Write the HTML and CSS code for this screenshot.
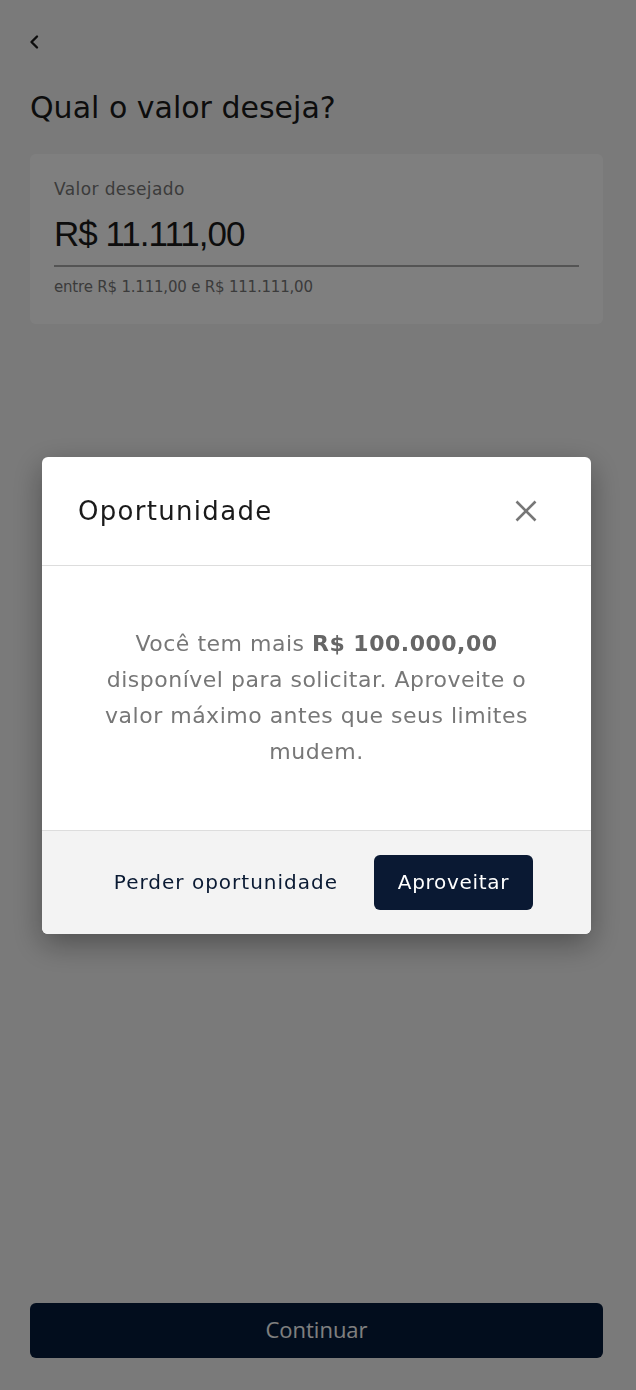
FILE: index.html
```html
<!DOCTYPE html>
<html lang="pt-BR">
<head>
    <meta charset="UTF-8" />
    <meta name="viewport" content="width=device-width, initial-scale=1.0" />
    <title>Qual o valor deseja?</title>
    <link rel="stylesheet" href="styles.css">
</head>
<body>
    <div class="page">
        <button class="back-button" aria-label="Voltar">
            <svg width="12" height="16" viewBox="0 0 12 16"><path d="M8 2.5 L2.5 8 L8 13.5" fill="none" stroke="#1a1a1a" stroke-width="2.4" stroke-linecap="round" stroke-linejoin="round"/></svg>
        </button>
        <h1 class="page-title">Qual o valor deseja?</h1>
        <div class="value-card">
            <label class="value-label">Valor desejado</label>
            <div class="value-amount">R$ 11.111,00</div>
            <div class="value-hint">entre R$ 1.111,00 e R$ 111.111,00</div>
        </div>
        <div class="spacer"></div>
        <button class="continue-button">Continuar</button>
    </div>

    <div class="overlay">
        <div class="modal">
            <div class="modal-header">
                <h2>Oportunidade</h2>
                <button class="close-button" aria-label="Fechar">
                    <svg width="22" height="22" viewBox="0 0 22 22"><path d="M1.5 1.5 L20.5 20.5 M20.5 1.5 L1.5 20.5" stroke="#777" stroke-width="2.6"/></svg>
                </button>
            </div>
            <div class="modal-body">
                <p>Você tem mais <strong>R$ 100.000,00</strong> disponível para solicitar. Aproveite o valor máximo antes que seus limites mudem.</p>
            </div>
            <div class="modal-footer">
                <button class="link-button">Perder oportunidade</button>
                <button class="primary-button">Aproveitar</button>
            </div>
        </div>
    </div>
</body>
</html>
```

FILE: styles.css
```css
* {
    box-sizing: border-box;
    font-family: 'DejaVu Sans', sans-serif;
}
body {
    margin: 0;
    background: #f5f5f5;
}
button {
    border: none;
    background: none;
    padding: 0;
    cursor: pointer;
}
.page {
    height: 1390px;
    padding: 32px 33px 32px 29px;
    display: flex;
    flex-direction: column;
}
.back-button {
    width: 12px;
    height: 20px;
    display: flex;
    align-items: center;
}
.page-title {
    margin: 38px 0 0 1px;
    font-size: 30px;
    font-weight: 400;
    color: #1a1a1a;
    line-height: 36px;
}
.value-card {
    margin: 28px 0 0 1px;
    background: #fff;
    border-radius: 6px;
    padding: 24px 24px 25px;
}
.value-label {
    display: block;
    font-size: 17px;
    letter-spacing: 0.4px;
    color: #777;
    line-height: 22px;
}
.value-amount {
    margin-top: 12px;
    font-family: 'Liberation Sans', sans-serif;
    font-size: 35px;
    letter-spacing: -1px;
    color: #1a1a1a;
    line-height: 44px;
    padding-bottom: 9px;
    border-bottom: 2px solid #a8a8a8;
}
.value-hint {
    margin-top: 8px;
    font-size: 15px;
    letter-spacing: -0.2px;
    color: #777;
    line-height: 24px;
}
.spacer {
    flex: 1;
}
.continue-button {
    margin-left: 1px;
    height: 55px;
    padding-bottom: 3px;
    border-radius: 6px;
    background: #041a3a;
    color: #fff;
    font-family: 'Open Sans', sans-serif;
    font-size: 22px;
}

/* modal */
.overlay {
    position: fixed;
    inset: 0;
    background: rgba(0, 0, 0, 0.5);
    display: flex;
    align-items: center;
    justify-content: center;
    padding-right: 3px;
}
.modal {
    width: 549px;
    background: #fff;
    border-radius: 6px;
    overflow: hidden;
    box-shadow: 0 10px 30px rgba(0, 0, 0, 0.35);
}
.modal-header {
    height: 109px;
    padding: 0 54px 0 36px;
    display: flex;
    align-items: center;
    justify-content: space-between;
    border-bottom: 1px solid #ddd;
}
.modal-header h2 {
    margin: 0;
    font-size: 26px;
    letter-spacing: 1.3px;
    font-weight: 400;
    color: #1a1a1a;
}
.close-button {
    width: 22px;
    height: 22px;
}
.modal-body {
    height: 265px;
    padding: 0 48px;
    display: flex;
    align-items: center;
    justify-content: center;
    border-bottom: 1px solid #ddd;
}
.modal-body p {
    margin: 0;
    text-align: center;
    font-size: 22px;
    letter-spacing: 0.5px;
    line-height: 36px;
    color: #777;
}
.modal-body strong {
    color: #666;
}
.modal-footer {
    height: 103px;
    background: #f3f3f3;
    display: flex;
    align-items: center;
    justify-content: flex-end;
    gap: 36px;
    padding: 0 58px 0 0;
}
.link-button {
    font-size: 20px;
    letter-spacing: 1px;
    color: #0a1a33;
}
.primary-button {
    width: 159px;
    height: 55px;
    border-radius: 6px;
    background: #0a1933;
    color: #fff;
    font-size: 20px;
    letter-spacing: 0.7px;
}
```
